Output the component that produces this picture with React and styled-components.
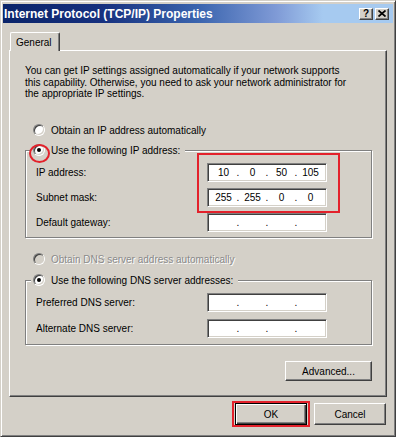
import React from 'react';
import styled, { createGlobalStyle, css } from 'styled-components';

const Global = createGlobalStyle`
  html, body { margin: 0; padding: 0; background: #d4d0c8; }
  body { font-family: "Liberation Sans", Arial, sans-serif; font-size: 10px; color: #000; }
  * { box-sizing: border-box; }
`;

const Window = styled.div`
  width: 396px;
  height: 437px;
  background: #d4d0c8;
  border: 1px solid;
  border-color: #d4d0c8 #404040 #404040 #d4d0c8;
  box-shadow: inset 1px 1px 0 #fff, inset -1px -1px 0 #808080;
  padding: 3px 2px 2px 2px;
  display: flex;
  flex-direction: column;
`;

const TitleBar = styled.div`
  height: 19px;
  display: flex;
  align-items: center;
  padding-left: 1px;
  padding-right: 4px;
  background: linear-gradient(to right, #0a246a 0%, #16307e 25%, #3a64ae 50%, #7f9ad6 70%, #a6caf0 82%, #a6caf0 100%);
`;

const Title = styled.span`
  color: #fff;
  font-weight: bold;
  font-size: 12px;
  white-space: nowrap;
`;

const TitleButtons = styled.div`
  margin-left: auto;
  display: flex;
  gap: 2px;
`;

const TitleButton = styled.div`
  width: 14px;
  height: 12px;
  background: #d4d0c8;
  border: 1px solid;
  border-color: #fff #404040 #404040 #fff;
  box-shadow: inset -1px -1px 0 #808080;
  display: flex;
  align-items: center;
  justify-content: center;
  font-weight: bold;
  font-size: 10px;
  line-height: 1;
`;

const Body = styled.div`
  display: flex;
  flex-direction: column;
  padding: 9px 6px 0 6px;
`;

const TabStrip = styled.div`
  display: flex;
  height: 18px;
`;

const Tab = styled.div`
  position: relative;
  z-index: 1;
  margin-left: 1px;
  height: 19px;
  margin-bottom: -1px;
  padding: 0 7px 0 5px;
  background: #d4d0c8;
  border-left: 1px solid #fff;
  border-top: 1px solid #fff;
  border-right: 1px solid #404040;
  box-shadow: inset -1px 0 0 #808080;
  border-radius: 2px 2px 0 0;
  display: flex;
  align-items: center;
  font-size: 10px;
`;

const Panel = styled.div`
  border: 1px solid;
  border-color: #fff #404040 #404040 #fff;
  box-shadow: inset -1px -1px 0 #808080;
  padding: 14px 14px 15px 15px;
  display: flex;
  flex-direction: column;
`;

const Paragraph = styled.p`
  margin: 0;
  line-height: 11.5px;
  font-size: 10px;
`;

const RadioRow = styled.div`
  display: flex;
  align-items: center;
  gap: 6px;
  height: 12px;
  margin-left: 8px;
  margin-top: ${p => p.$mt}px;
  ${p => p.$disabled && css`
    color: #8a8a8a;
    text-shadow: 1px 1px 0 #fff;
  `}
`;

const Radio = styled.span`
  position: relative;
  flex: none;
  width: 12px;
  height: 12px;
  border-radius: 50%;
  border: 1px solid;
  border-color: #808080 #fff #fff #808080;
  background: ${p => (p.$disabled ? '#d4d0c8' : '#fff')};
  &::before {
    content: '';
    position: absolute;
    inset: 0;
    border-radius: 50%;
    box-shadow: inset 1px 1px 0 #404040, inset -1px -1px 0 #d4d0c8;
  }
  ${p => p.$checked && css`
    &::after {
      content: '';
      position: absolute;
      left: 3px;
      top: 3px;
      width: 4px;
      height: 4px;
      border-radius: 50%;
      background: #000;
    }
  `}
`;

const GroupBox = styled.div`
  position: relative;
  margin-top: ${p => p.$mt}px;
  border: 1px solid #808080;
  box-shadow: 1px 1px 0 #fff, inset 1px 1px 0 #fff;
  padding-bottom: ${p => p.$pb}px;
  display: flex;
  flex-direction: column;
`;

const Legend = styled.div`
  position: relative;
  align-self: flex-start;
  margin-top: -7px;
  margin-left: 5px;
  padding: 0 5px 0 2px;
  height: 12px;
  background: #d4d0c8;
  display: flex;
  align-items: center;
  gap: 6px;
`;

const RedCircle = styled.span`
  position: absolute;
  left: -2px;
  top: 0px;
  width: 21px;
  height: 19px;
  border: 2px solid #e3212b;
  border-radius: 50%;
  pointer-events: none;
`;

const RedBox = styled.span`
  position: absolute;
  left: ${p => p.$x}px;
  top: ${p => p.$y}px;
  width: ${p => p.$w}px;
  height: ${p => p.$h}px;
  border: 2px solid #e3212b;
  pointer-events: none;
`;

const Rows = styled.div`
  margin-top: 7px;
  display: flex;
  flex-direction: column;
  gap: ${p => p.$gap}px;
`;

const Row = styled.div`
  display: grid;
  grid-template-columns: 171px 120px;
  align-items: center;
  height: 19px;
  padding-left: 10px;
`;

const Label = styled.span`
  font-size: 10px;
`;

const IpField = styled.div`
  width: 120px;
  height: 19px;
  background: #fff;
  border: 1px solid;
  border-color: #808080 #fff #fff #808080;
  box-shadow: inset 1px 1px 0 #404040, inset -1px -1px 0 #d4d0c8;
  padding: 0 0 0 2px;
  display: flex;
  align-items: center;
  font-size: 10px;
`;

const Segment = styled.span`
  width: 27px;
  text-align: center;
`;

const Dot = styled.span`
  width: 2px;
  display: flex;
  justify-content: center;
`;

const Button = styled.button`
  position: relative;
  width: ${p => p.$w}px;
  height: ${p => p.$h}px;
  padding: 0;
  margin: 0;
  font-family: "Liberation Sans", Arial, sans-serif;
  font-size: 10px;
  color: #000;
  background: #d4d0c8;
  border: 1px solid;
  border-color: #fff #404040 #404040 #fff;
  box-shadow: inset -1px -1px 0 #808080;
  ${p => p.$default && css`
    border: 1px solid #000;
    box-shadow: inset 1px 1px 0 #fff, inset -1px -1px 0 #404040, inset -2px -2px 0 #808080;
  `}
  ${p => p.$marked && css`
    &::after {
      content: '';
      position: absolute;
      left: -4px;
      right: -4px;
      top: -3px;
      bottom: -3px;
      border: 2px solid #e3212b;
    }
  `}
`;

const AdvancedButton = styled(Button)`
  align-self: flex-end;
  margin-top: 16px;
`;

const Footer = styled.div`
  display: flex;
  justify-content: flex-end;
  gap: 7px;
  margin-top: 6px;
  padding-right: 1px;
`;

function Ip({ value }) {
  const parts = value || ['', '', '', ''];
  return (
    <IpField>
      {parts.map((p, i) => (
        <React.Fragment key={i}>
          {i > 0 && <Dot>.</Dot>}
          <Segment>{p}</Segment>
        </React.Fragment>
      ))}
    </IpField>
  );
}

function CloseGlyph() {
  return (
    <svg width="8" height="7" viewBox="0 0 8 7">
      <path d="M0.5 0.5 L7.5 6.5 M7.5 0.5 L0.5 6.5" stroke="#000" strokeWidth="1.7" fill="none" />
    </svg>
  );
}

export default function App() {
  return (
    <>
      <Global />
      <Window>
        <TitleBar>
          <Title>Internet Protocol (TCP/IP) Properties</Title>
          <TitleButtons>
            <TitleButton>?</TitleButton>
            <TitleButton><CloseGlyph /></TitleButton>
          </TitleButtons>
        </TitleBar>
        <Body>
          <TabStrip>
            <Tab>General</Tab>
          </TabStrip>
          <Panel>
            <Paragraph>
              You can get IP settings assigned automatically if your network supports<br />
              this capability. Otherwise, you need to ask your network administrator for<br />
              the appropriate IP settings.
            </Paragraph>
            <RadioRow $mt={24.5}>
              <Radio />
              <span>Obtain an IP address automatically</span>
            </RadioRow>
            <GroupBox $mt={14} $pb={5}>
              <Legend>
                <Radio $checked />
                <span>Use the following IP address:</span>
                <RedCircle />
              </Legend>
              <Rows $gap={6}>
                <Row><Label>IP address:</Label><Ip value={['10', '0', '50', '105']} /></Row>
                <Row><Label>Subnet mask:</Label><Ip value={['255', '255', '0', '0']} /></Row>
                <Row><Label>Default gateway:</Label><Ip /></Row>
              </Rows>
              <RedBox $x={171} $y={2} $w={143} $h={60} />
            </GroupBox>
            <RadioRow $mt={15} $disabled>
              <Radio $disabled />
              <span>Obtain DNS server address automatically</span>
            </RadioRow>
            <GroupBox $mt={15} $pb={6}>
              <Legend>
                <Radio $checked />
                <span>Use the following DNS server addresses:</span>
              </Legend>
              <Rows $gap={7}>
                <Row><Label>Preferred DNS server:</Label><Ip /></Row>
                <Row><Label>Alternate DNS server:</Label><Ip /></Row>
              </Rows>
            </GroupBox>
            <AdvancedButton $w={87} $h={20}>Advanced...</AdvancedButton>
          </Panel>
          <Footer>
            <Button $w={72} $h={22} $default $marked>OK</Button>
            <Button $w={72} $h={22}>Cancel</Button>
          </Footer>
        </Body>
      </Window>
    </>
  );
}
